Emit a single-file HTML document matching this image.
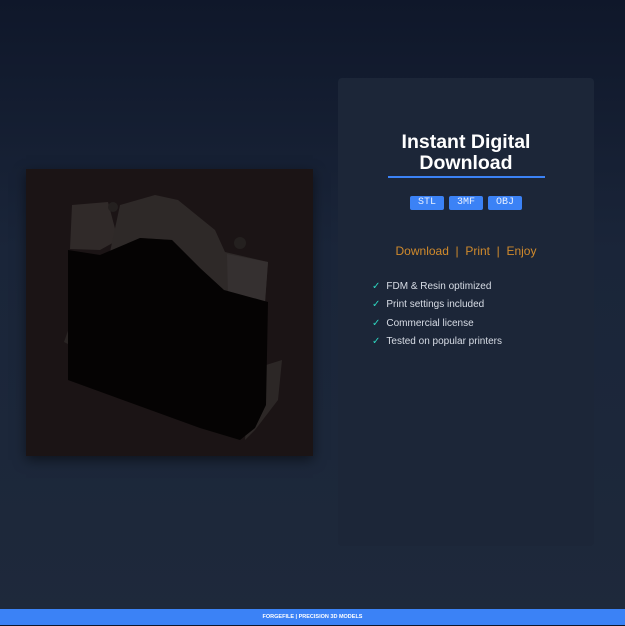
<!DOCTYPE html>
<html><head><style>
body{margin:0;width:625px;height:625px;background:linear-gradient(#0f172a,#1a2539 40%,#1e293b);font-family:"Liberation Sans",sans-serif;position:relative;overflow:hidden}
.img{position:absolute;left:26px;top:169px;width:287px;height:287px;background:#1b1415;box-shadow:0 4px 12px rgba(0,0,0,.5)}
.panel{position:absolute;left:338px;top:78px;width:256px;height:468px;background:#1c2638;border-radius:4px}
h1{margin:0;position:absolute;top:54px;left:0;width:256px;text-align:center;color:#fff;font-size:19.5px;line-height:21px;font-weight:bold}
.line{position:absolute;left:50px;top:98px;width:157px;height:2px;background:#3b82f6}
.tags{position:absolute;top:118px;left:0;width:256px;text-align:center;font-size:0}
.tags span{display:inline-block;background:#3b82f6;color:#e8f0ff;font-family:"Liberation Mono",monospace;font-size:10px;width:34px;height:14px;line-height:14px;margin:0 2.5px;border-radius:2px}
.dl{position:absolute;top:166px;left:0;width:256px;text-align:center;color:#d08a2c;font-size:12px}
ul{position:absolute;top:203px;left:34px;margin:0;padding:0;list-style:none;color:#d8dde6;font-size:10px}
li{height:18.3px}
li b{color:#2dd4bf;font-weight:normal;margin-right:6px}
.foot{position:absolute;left:0;top:609px;width:625px;height:16px;background:#3b82f6;color:#fff;font-size:5.5px;font-weight:bold;text-align:center;line-height:17px}
</style></head><body>
<div class="img"><svg width="287" height="287" viewBox="26 169 287 287">
<polygon points="64,342 70,325 70,345" fill="#2a2524"/>
<polygon points="250,370 282,360 278,400 255,430 245,440" fill="#2c2726"/>
<polygon points="72,205 108,202 118,240 100,250 70,249" fill="#302a29"/>
<polygon points="120,205 155,195 178,200 215,230 225,252 268,262 265,302 222,292 200,268 172,240 140,238 110,252" fill="#2e2928"/>
<polygon points="227,254 268,262 265,303 228,296" fill="#353030"/>
<polygon points="68,250 100,255 140,238 172,240 200,268 224,290 268,302 266,405 255,428 240,440 200,428 68,380" fill="#050303"/>
<circle cx="113" cy="207" r="5" fill="#24201f"/><circle cx="240" cy="243" r="6" fill="#24201f"/>
</svg></div>
<div class="panel">
<h1>Instant Digital<br>Download</h1>
<div class="line"></div>
<div class="tags"><span>STL</span><span>3MF</span><span>OBJ</span></div>
<div class="dl">Download &nbsp;|&nbsp; Print &nbsp;|&nbsp; Enjoy</div>
<ul><li><b>✓</b>FDM &amp; Resin optimized</li><li><b>✓</b>Print settings included</li><li><b>✓</b>Commercial license</li><li><b>✓</b>Tested on popular printers</li></ul>
</div>
<div class="foot">FORGEFILE | PRECISION 3D MODELS</div>
</body></html>
